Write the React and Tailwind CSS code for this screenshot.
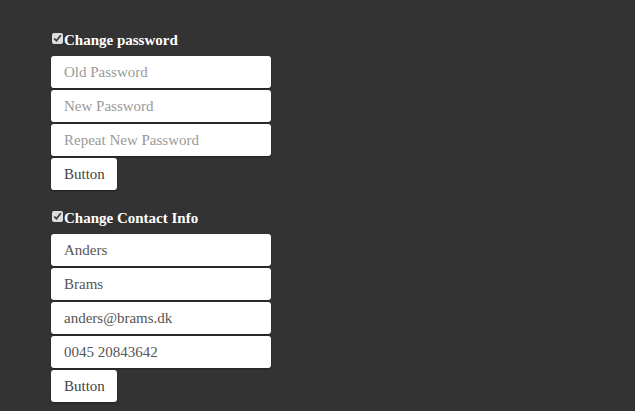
import React from 'react';

const Field = ({ placeholder, value }) => (
  <input
    type="text"
    placeholder={placeholder}
    defaultValue={value}
    className="block w-[220px] h-[32px] mb-[2px] rounded-[3px] bg-white pl-[13px] pr-3 text-[15px] text-[#555] placeholder:text-[#999] shadow-[0_1px_2px_rgba(0,0,0,0.35)] outline-none"
  />
);

const Section = ({ title, children }) => (
  <div className="mb-[18px]">
    <label className="flex items-center h-[20px] mb-[6px] text-[15px] font-bold text-white">
      <input type="checkbox" defaultChecked className="w-[11px] h-[11px] m-0 ml-[1px] mr-[1px] -mt-[4px] accent-[#ddd]" />
      {title}
    </label>
    {children}
    <button className="block h-[32px] w-[66px] pl-[13px] text-left rounded-[3px] bg-white text-[15px] text-[#444] shadow-[0_1px_2px_rgba(0,0,0,0.35)]">
      Button
    </button>
  </div>
);

export default function App() {
  return (
    <div className="min-h-[411px] bg-[#333333] pl-[51px] pt-[30px] font-['Liberation_Serif',serif]">
      <Section title="Change password">
        <Field placeholder="Old Password" />
        <Field placeholder="New Password" />
        <Field placeholder="Repeat New Password" />
      </Section>
      <Section title="Change Contact Info">
        <Field value="Anders" />
        <Field value="Brams" />
        <Field value="anders@brams.dk" />
        <Field value="0045 20843642" />
      </Section>
    </div>
  );
}
